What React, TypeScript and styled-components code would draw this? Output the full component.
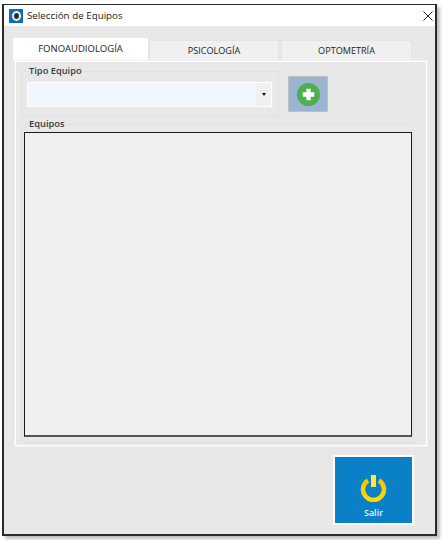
import React from "react";
import styled, { createGlobalStyle } from "styled-components";

const GlobalStyle = createGlobalStyle`
  html, body {
    margin: 0;
    padding: 0;
    background: #ffffff;
  }
  * {
    box-sizing: border-box;
  }
`;

const Page = styled.div`
  width: 445px;
  height: 540px;
  padding: 4px 5px 2px 2px;
  font-family: "Open Sans", "Noto Sans", sans-serif;
`;

const Win = styled.div`
  width: 435px;
  height: 532px;
  display: flex;
  flex-direction: column;
  background: #e8e8e8;
  border: 2px solid #2b2b2b;
  border-top-width: 1px;
  box-shadow: 3px 3px 3px rgba(0, 0, 0, 0.25);
`;

const TitleBar = styled.div`
  height: 21px;
  flex: none;
  display: flex;
  align-items: center;
  padding: 0 1px 0 5px;
  background: #ffffff;
  color: #222222;
  font-size: 9.8px;
`;

const AppIcon = styled.div`
  width: 14px;
  height: 14px;
  margin-right: 4px;
  background: #0f6fb5;
  display: flex;
  align-items: center;
  justify-content: center;

  &::after {
    content: "";
    width: 5px;
    height: 6px;
    border-radius: 50%;
    background: #2e2e2e;
    border: 2px solid #eef3f8;
    box-sizing: content-box;
  }
`;

const TitleText = styled.span`
  flex: 1;
`;

const CloseIcon = styled.svg`
  width: 10px;
  height: 10px;
  margin-right: 1px;
`;

const Body = styled.div`
  flex: 1;
  display: flex;
  flex-direction: column;
  padding: 12px 8px 0 9px;
`;

const TabRow = styled.div`
  display: flex;
  gap: 1px;
  height: 23px;
`;

const Tab = styled.div<{ $active?: boolean; $w: number }>`
  width: ${(p) => p.$w}px;
  margin-top: ${(p) => (p.$active ? 0 : 2)}px;
  margin-right: ${(p) => (p.$w === 130 ? 1 : 0)}px;
  display: flex;
  align-items: center;
  justify-content: center;
  font-size: ${(p) => (p.$active ? 9.5 : 9.1)}px;
  color: #222222;
  background: ${(p) => (p.$active ? "#ffffff" : "#f0f0f0")};
  border: 1px solid ${(p) => (p.$active ? "#ffffff" : "#e4e4e4")};
  padding-bottom: ${(p) => (p.$active ? 2 : 1)}px;
`;

const TabPanel = styled.div`
  width: 412px;
  height: 385px;
  margin-left: 2px;
  padding: 3px 5px 0 5px;
  display: flex;
  flex-direction: column;
  gap: 1px;
  background: #e8e8e8;
  border: 1px solid #ffffff;
  outline: 1px solid #f0f0f0;
`;

const TopRow = styled.div`
  display: flex;
  align-items: flex-start;
  gap: 9px;
`;

const Group = styled.fieldset<{ $w: number; $h: number }>`
  width: ${(p) => p.$w}px;
  height: ${(p) => p.$h}px;
  margin: 0;
  padding: 0 2px;
  border: 1px solid #e0e0e0;
  min-inline-size: 0;
`;

const GroupLabel = styled.legend`
  margin-left: 3px;
  padding: 0 2px;
  font-size: 9.3px;
  font-weight: 600;
  line-height: 12px;
  color: #3a3a3a;
`;

const ComboBox = styled.div`
  width: 245px;
  height: 25px;
  margin: 5px 0 0 3px;
  display: flex;
  background: #eff6fd;
  border: 1px solid #ffffff;
`;

const ComboField = styled.div`
  flex: 1;
`;

const ComboArrow = styled.div`
  width: 15px;
  display: flex;
  align-items: center;
  justify-content: center;
  background: #f0f0f0;

  &::after {
    content: "";
    border-left: 2.5px solid transparent;
    border-right: 2.5px solid transparent;
    border-top: 3px solid #111111;
  }
`;

const AddButton = styled.button`
  width: 40px;
  height: 36px;
  margin-top: 11px;
  padding: 0;
  display: flex;
  align-items: center;
  justify-content: center;
  background: #9bb4d2;
  border: 1px solid #c0c0c0;
`;

const ListBox = styled.div`
  width: 388px;
  height: 305px;
  margin-top: 2px;
  background: #f0f0f0;
  border: 1px solid #1a1a1a;
  border-bottom-color: #555555;
  border-bottom-width: 2px;
`;

const Footer = styled.div`
  display: flex;
  justify-content: flex-end;
  padding: 9px 13px 0 0;
`;

const ExitButton = styled.button`
  width: 81px;
  height: 70px;
  padding: 18px 0 0;
  display: flex;
  flex-direction: column;
  align-items: center;
  gap: 4px;
  background: #0a80c6;
  border: 2px solid #ffffff;
  color: #e8f2fa;
  font-family: inherit;
  font-size: 9px;
  font-weight: 600;
`;

export default function App() {
  return (
    <>
      <GlobalStyle />
      <Page>
        <Win>
          <TitleBar>
            <AppIcon />
            <TitleText>Selección de Equipos</TitleText>
            <CloseIcon viewBox="0 0 10 10">
              <path d="M0.5 0.5 L9.5 9.5 M9.5 0.5 L0.5 9.5" stroke="#222" strokeWidth="1" />
            </CloseIcon>
          </TitleBar>
          <Body>
            <TabRow>
              <Tab $active $w={135}>FONOAUDIOLOGÍA</Tab>
              <Tab $w={130}>PSICOLOGÍA</Tab>
              <Tab $w={131}>OPTOMETRÍA</Tab>
            </TabRow>
            <TabPanel>
              <TopRow>
                <Group $w={258} $h={52}>
                  <GroupLabel>Tipo Equipo</GroupLabel>
                  <ComboBox>
                    <ComboField />
                    <ComboArrow />
                  </ComboBox>
                </Group>
                <AddButton>
                  <svg width="23" height="23" viewBox="0 0 24 24">
                    <circle cx="12" cy="12" r="12" fill="#4caf50" />
                    <path d="M12 6v12M6 12h12" stroke="#ffffff" strokeWidth="4.5" />
                  </svg>
                </AddButton>
              </TopRow>
              <Group $w={393} $h={325}>
                <GroupLabel>Equipos</GroupLabel>
                <ListBox />
              </Group>
            </TabPanel>
            <Footer>
              <ExitButton>
                <svg width="27" height="27" viewBox="0 0 27 27">
                  <defs>
                    <linearGradient id="pw" x1="0" y1="0" x2="0" y2="1">
                      <stop offset="0" stopColor="#fbc400" />
                      <stop offset="1" stopColor="#ffd800" />
                    </linearGradient>
                  </defs>
                  <path d="M8 5.5 A10.5 10.5 0 1 0 19 5.5" fill="none" stroke="url(#pw)" strokeWidth="4.5" />
                  <rect x="11" y="0" width="5" height="12" fill="#ffe44a" />
                </svg>
                Salir
              </ExitButton>
            </Footer>
          </Body>
        </Win>
      </Page>
    </>
  );
}
